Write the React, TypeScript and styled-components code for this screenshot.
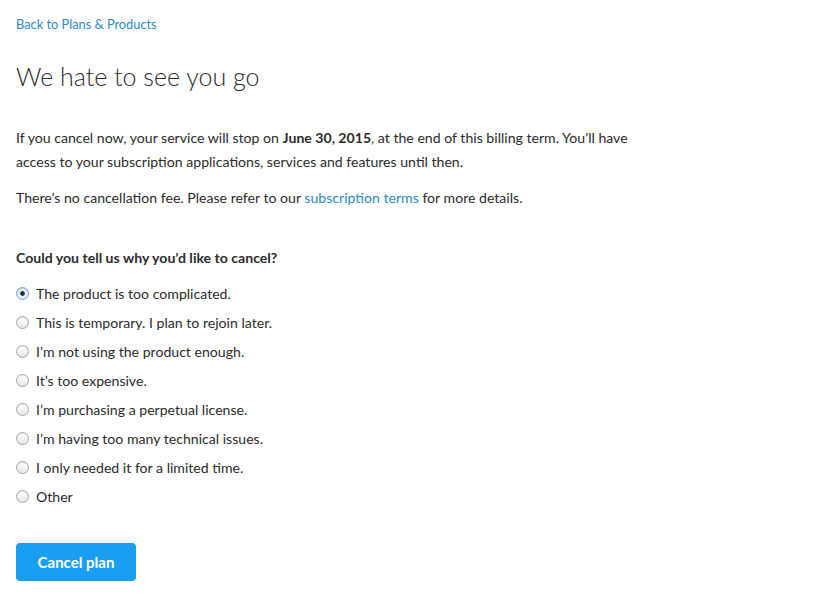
import React, { useState } from "react";
import styled, { createGlobalStyle } from "styled-components";

const Global = createGlobalStyle`
  html, body { margin: 0; padding: 0; background: #fff; }
  body { font-family: Lato, "Open Sans", "Liberation Sans", sans-serif; color: #2c2c2c; }
`;

const Page = styled.div`
  padding: 16px 16px 0 16px;
  display: flex;
  flex-direction: column;
  align-items: flex-start;
`;

const BackLink = styled.a`
  font-size: 12.8px;
  color: #2b8ac6;
  text-decoration: none;
  line-height: 16px;
`;

const Title = styled.h1`
  margin: 27px 0 0 0;
  font-size: 25px;
  font-weight: 300;
  line-height: 34px;
  color: #2c2c2c;
`;

const Para = styled.p<{ $top: number }>`
  margin: ${(p) => p.$top}px 0 0 0;
  font-size: 14.1px;
  line-height: 24px;
  max-width: 640px;
  color: #2c2c2c;
`;

const InlineLink = styled.a`
  color: #2b8ac6;
  text-decoration: none;
`;

const Question = styled.h2`
  margin: 36px 0 0 0;
  font-size: 14.1px;
  font-weight: 700;
  line-height: 24px;
`;

const List = styled.div`
  margin-top: 12px;
  display: flex;
  flex-direction: column;
  gap: 5px;
`;

const Option = styled.label`
  display: flex;
  align-items: center;
  gap: 7px;
  font-size: 14.1px;
  line-height: 24px;
  cursor: pointer;
`;

const Radio = styled.span<{ $checked: boolean }>`
  width: 13px;
  height: 13px;
  box-sizing: border-box;
  border-radius: 50%;
  border: 1px solid ${(p) => (p.$checked ? "#6aa6e0" : "#a6a6a6")};
  background: ${(p) =>
    p.$checked
      ? "radial-gradient(circle, #2a2a2a 0 2px, #eaf3fc 2.5px, #d6e8f9 100%)"
      : "linear-gradient(#ffffff, #e6e6e6)"};
  box-shadow: inset 0 1px 1px rgba(0, 0, 0, 0.08);
  flex-shrink: 0;
  margin-top: -2px;
`;

const Button = styled.button`
  margin-top: 34px;
  width: 120px;
  height: 38px;
  border: none;
  border-radius: 4px;
  background: #1a9ef2;
  color: #fff;
  font-family: inherit;
  font-size: 15px;
  font-weight: 700;
  cursor: pointer;
`;

const reasons = [
  "The product is too complicated.",
  "This is temporary. I plan to rejoin later.",
  "I’m not using the product enough.",
  "It’s too expensive.",
  "I’m purchasing a perpetual license.",
  "I’m having too many technical issues.",
  "I only needed it for a limited time.",
  "Other",
];

export default function App() {
  const [sel, setSel] = useState(0);
  return (
    <Page>
      <Global />
      <BackLink href="#">Back to Plans &amp; Products</BackLink>
      <Title>We hate to see you go</Title>
      <Para $top={33}>
        If you cancel now, your service will stop on <b>June 30, 2015</b>, at the end of this billing term. You’ll have
        access to your subscription applications, services and features until then.
      </Para>
      <Para $top={12}>
        There’s no cancellation fee. Please refer to our <InlineLink href="#">subscription terms</InlineLink> for more
        details.
      </Para>
      <Question>Could you tell us why you’d like to cancel?</Question>
      <List>
        {reasons.map((r, i) => (
          <Option key={r} onClick={() => setSel(i)}>
            <Radio $checked={sel === i} />
            {r}
          </Option>
        ))}
      </List>
      <Button>Cancel plan</Button>
    </Page>
  );
}
